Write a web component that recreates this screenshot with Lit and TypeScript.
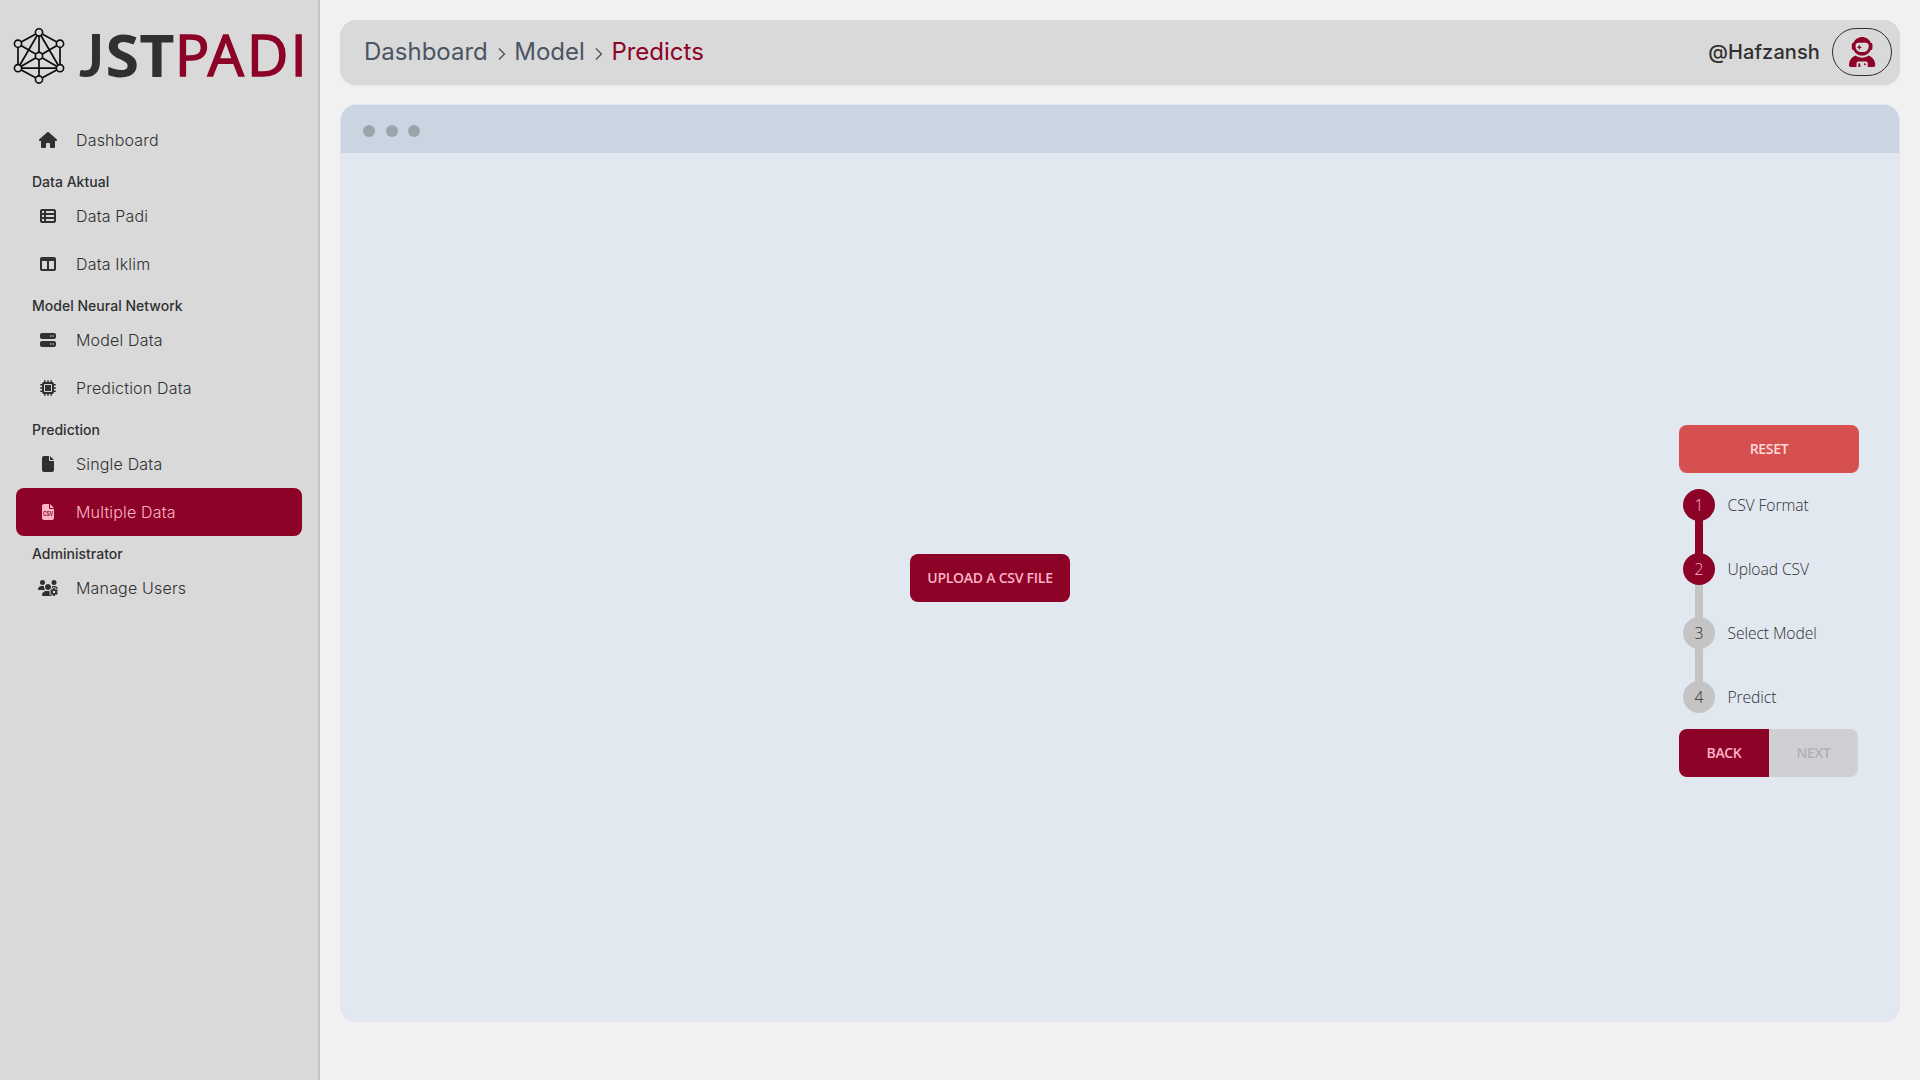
import { LitElement, html, svg, css } from "lit";
import { customElement, property } from "lit/decorators.js";
import { classMap } from "lit/directives/class-map.js";

interface Glyph {
  w: number;
  d: string;
}

const FILE =
  "M0 64C0 28.7 28.7 0 64 0H224V128c0 17.7 14.3 32 32 32H384V448c0 35.3-28.7 64-64 64H64c-35.3 0-64-28.7-64-64V64zm384 64H256V0L384 128z";

const GLYPHS: Record<string, Glyph> = {
  house: {
    w: 576,
    d: "M575.8 255.5c0 18-15 32.1-32 32.1h-32l.7 160.2c0 2.7-.2 5.4-.5 8.1V472c0 22.1-17.9 40-40 40H456c-1.1 0-2.2 0-3.3-.1c-1.4 .1-2.8 .1-4.2 .1H416 392c-22.1 0-40-17.9-40-40V448 384c0-17.7-14.3-32-32-32H256c-17.7 0-32 14.3-32 32v64 24c0 22.1-17.9 40-40 40H160 128.1c-1.5 0-3-.1-4.5-.2c-1.2 .1-2.4 .2-3.6 .2H104c-22.1 0-40-17.9-40-40V360c0-.9 0-1.9 .1-2.8V287.6H32c-18 0-32-14-32-32.1c0-9 3-17 10-24L266.4 8c7-7 15-8 22-8s15 2 21 7L564.8 231.5c8 7 12 15 11 24z",
  },
  list: {
    w: 512,
    d: "M0 96C0 60.7 28.7 32 64 32H448c35.3 0 64 28.7 64 64V416c0 35.3-28.7 64-64 64H64c-35.3 0-64-28.7-64-64V96zm64 0v64h64V96H64zm384 0H192v64H448V96zM64 224v64h64V224H64zm384 0H192v64H448V224zM64 352v64h64V352H64zm384 0H192v64H448V352z",
  },
  columns: {
    w: 512,
    d: "M0 96C0 60.7 28.7 32 64 32H448c35.3 0 64 28.7 64 64V416c0 35.3-28.7 64-64 64H64c-35.3 0-64-28.7-64-64V96zm64 64V416H224V160H64zm384 0H288V416H448V160z",
  },
  server: {
    w: 512,
    d: "M64 32C28.7 32 0 60.7 0 96v64c0 35.3 28.7 64 64 64H448c35.3 0 64-28.7 64-64V96c0-35.3-28.7-64-64-64H64zm280 72a24 24 0 1 1 0 48 24 24 0 1 1 0-48zm48 24a24 24 0 1 1 48 0 24 24 0 1 1 -48 0zM64 288c-35.3 0-64 28.7-64 64v64c0 35.3 28.7 64 64 64H448c35.3 0 64-28.7 64-64V352c0-35.3-28.7-64-64-64H64zm280 72a24 24 0 1 1 0 48 24 24 0 1 1 0-48zm56 24a24 24 0 1 1 48 0 24 24 0 1 1 -48 0z",
  },
  chip: {
    w: 512,
    d: "M176 24c0-13.3-10.7-24-24-24s-24 10.7-24 24V64c-35.3 0-64 28.7-64 64H24c-13.3 0-24 10.7-24 24s10.7 24 24 24H64v56H24c-13.3 0-24 10.7-24 24s10.7 24 24 24H64v56H24c-13.3 0-24 10.7-24 24s10.7 24 24 24H64c0 35.3 28.7 64 64 64v40c0 13.3 10.7 24 24 24s24-10.7 24-24V448h56v40c0 13.3 10.7 24 24 24s24-10.7 24-24V448h56v40c0 13.3 10.7 24 24 24s24-10.7 24-24V448c35.3 0 64-28.7 64-64h40c13.3 0 24-10.7 24-24s-10.7-24-24-24H448V280h40c13.3 0 24-10.7 24-24s-10.7-24-24-24H448V176h40c13.3 0 24-10.7 24-24s-10.7-24-24-24H448c0-35.3-28.7-64-64-64V24c0-13.3-10.7-24-24-24s-24 10.7-24 24V64H280V24c0-13.3-10.7-24-24-24s-24 10.7-24 24V64H176V24zM160 128H352c17.7 0 32 14.3 32 32V352c0 17.7-14.3 32-32 32H160c-17.7 0-32-14.3-32-32V160c0-17.7 14.3-32 32-32zm192 32H160V352H352V160z",
  },
  file: { w: 384, d: FILE },
  csv: { w: 384, d: FILE },
  users: {
    w: 640,
    d: "M144 160A80 80 0 1 0 144 0a80 80 0 1 0 0 160zm368 0A80 80 0 1 0 512 0a80 80 0 1 0 0 160zM0 298.7C0 310.4 9.6 320 21.3 320H234.7c.2 0 .4 0 .7 0c-26.6-23.5-43.3-57.8-43.3-96c0-7.6 .7-15 1.9-22.3c-13.6-6.3-28.7-9.7-44.6-9.7H106.7C47.8 192 0 239.8 0 298.7zM320 320c24 0 45.9-8.8 62.7-23.3c2.5-3.7 5.2-7.3 8-10.7c2.7-3.3 5.7-6.1 9-8.3C410 262.3 416 243.9 416 224c0-53-43-96-96-96s-96 43-96 96s43 96 96 96zm65.4 60.2c-10.3-5.9-18.1-16.2-20.8-28.2H261.3C187.7 352 128 411.7 128 485.3c0 14.7 11.9 26.7 26.7 26.7H455.2c-2.1-5.2-3.2-10.9-3.2-16.4v-3c-1.3-.7-2.7-1.5-4-2.3l-2.6 1.5c-16.8 9.7-40.5 8-54.7-9.7c-4.5-5.6-8.6-11.5-12.4-17.6l-.1-.2-.1-.2-2.4-4.1-.1-.2-.1-.2c-3.4-6.2-6.4-12.6-9-19.3c-8.2-21.2 2.2-42.6 19-52.3l2.7-1.5c0-.8 0-1.5 0-2.3s0-1.5 0-2.3l-2.7-1.5zM533.3 192H490.7c-15.9 0-31 3.5-44.6 9.7c1.3 7.2 1.9 14.7 1.9 22.3c0 17.4-3.5 33.9-9.7 49c2.5 .9 4.9 2 7.1 3.3l2.6 1.5c1.3-.8 2.6-1.6 4-2.3v-3c0-19.4 13.3-39.1 35.8-42.6c7.9-1.2 16-1.9 24.2-1.9s16.3 .6 24.2 1.9c22.5 3.5 35.8 23.2 35.8 42.6v3c1.3 .7 2.7 1.5 4 2.3l2.6-1.5c16.8-9.7 40.5-8 54.7 9.7c2.3 2.8 4.5 5.8 6.6 8.7c-2.1-57.1-49-102.7-106.6-102.7zm91.3 163.9c6.3-3.6 9.5-11.1 6.8-18c-2.1-5.5-4.6-10.8-7.4-15.9l-2.3-4c-3.1-5.1-6.5-9.9-10.2-14.5c-4.6-5.7-12.7-6.7-19-3l-2.9 1.7c-9.2 5.3-20.4 4-29.6-1.3s-16.1-14.5-16.1-25.1v-3.4c0-7.3-4.9-13.8-12.1-14.9c-6.5-1-13.1-1.5-19.9-1.5s-13.4 .5-19.9 1.5c-7.2 1.1-12.1 7.6-12.1 14.9v3.4c0 10.6-6.9 19.8-16.1 25.1s-20.4 6.6-29.6 1.3l-2.9-1.7c-6.3-3.6-14.4-2.6-19 3c-3.7 4.6-7.1 9.5-10.2 14.6l-2.3 3.9c-2.8 5.1-5.3 10.4-7.4 15.9c-2.6 6.8 .5 14.3 6.8 17.9l2.9 1.7c9.2 5.3 13.7 15.8 13.7 26.4s-4.5 21.1-13.7 26.4l-3 1.7c-6.3 3.6-9.5 11.1-6.8 17.9c2.1 5.5 4.6 10.7 7.4 15.8l2.4 4.1c3 5.1 6.4 9.9 10.1 14.5c4.6 5.7 12.7 6.7 19 3l2.9-1.7c9.2-5.3 20.4-4 29.6 1.3s16.1 14.5 16.1 25.1v3.4c0 7.3 4.9 13.8 12.1 14.9c6.5 1 13.1 1.5 19.9 1.5s13.4-.5 19.9-1.5c7.2-1.1 12.1-7.6 12.1-14.9v-3.4c0-10.6 6.9-19.8 16.1-25.1s20.4-6.6 29.6-1.3l2.9 1.7c6.3 3.6 14.4 2.6 19-3c3.7-4.6 7.1-9.4 10.1-14.5l2.4-4.2c2.8-5.1 5.3-10.3 7.4-15.8c2.6-6.8-.5-14.3-6.8-17.9l-3-1.7c-9.2-5.3-13.7-15.8-13.7-26.4s4.5-21.1 13.7-26.4l3-1.7zM472 384a40 40 0 1 1 80 0 40 40 0 1 1 -80 0z",
  },
  astronaut: {
    w: 448,
    d: "M370.7 96.1C346.1 39.5 289.7 0 224 0S101.9 39.5 77.3 96.1C60.9 97.5 48 111.2 48 128v64c0 16.8 12.9 30.5 29.3 31.9C101.9 280.5 158.3 320 224 320s122.1-39.5 146.7-96.1c16.4-1.4 29.3-15.1 29.3-31.9V128c0-16.8-12.9-30.5-29.3-31.9zM336 144v16c0 53-43 96-96 96H208c-53 0-96-43-96-96V144c0-26.5 21.5-48 48-48H288c26.5 0 48 21.5 48 48zM189.3 162.7l-6-21.2c-.9-3.3-3.9-5.5-7.3-5.5s-6.4 2.2-7.3 5.5l-6 21.2-21.2 6c-3.3 .9-5.5 3.9-5.5 7.3s2.2 6.4 5.5 7.3l21.2 6 6 21.2c.9 3.3 3.9 5.5 7.3 5.5s6.4-2.2 7.3-5.5l6-21.2 21.2-6c3.3-.9 5.5-3.9 5.5-7.3s-2.2-6.4-5.5-7.3l-21.2-6zM112.7 316.5C46.7 342.6 0 407 0 482.3C0 498.7 13.3 512 29.7 512H128V448c0-17.7 14.3-32 32-32H288c17.7 0 32 14.3 32 32v64l98.3 0c16.4 0 29.7-13.3 29.7-29.7c0-75.3-46.7-139.7-112.7-165.8C303.9 338.8 265.5 352 224 352s-79.9-13.2-111.3-35.5zM176 448c-8.8 0-16 7.2-16 16v48h32V464c0-8.8-7.2-16-16-16zm96 32a16 16 0 1 0 0-32 16 16 0 1 0 0 32z",
  },
};

@customElement("ui-icon")
class UiIcon extends LitElement {
  @property() name = "file";
  @property({ type: Number }) size = 16;

  static styles = css`
    :host {
      display: inline-flex;
    }
    .glyph {
      display: block;
      overflow: visible;
      fill: currentColor;
    }
    .badge {
      fill: #8c0327;
      font: 700 205px "Liberation Sans", Arial, sans-serif;
    }
  `;

  render() {
    const g = GLYPHS[this.name];
    return html`<svg class="glyph" width=${(g.w / 512) * this.size} height=${this.size} viewBox="0 0 ${g.w} 512">
      <path d=${g.d}></path>
      ${this.name === "csv"
        ? svg`<text class="badge" x="32" y="376" textLength="320" lengthAdjust="spacingAndGlyphs">CSV</text>`
        : null}
    </svg>`;
  }
}

@customElement("brand-logo")
class BrandLogo extends LitElement {
  static styles = css`
    :host {
      display: block;
    }
    .logo {
      display: block;
    }
    .edge {
      stroke: #0c0c0c;
      stroke-width: 1.7;
      fill: none;
    }
    .node {
      stroke: #0c0c0c;
      stroke-width: 1.6;
      fill: #d9d9d9;
    }
    .word {
      font-family: "Open Sans", "Noto Sans", sans-serif;
      font-size: 58.8px;
    }
    .bold {
      font-weight: 700;
      fill: #303030;
    }
    .lato {
      font-family: Lato, sans-serif;
    }
    .thin {
      font-size: 57px;
      font-weight: 400;
      fill: #8c0327;
      stroke: #8c0327;
      stroke-width: 1.6;
    }
  `;

  render() {
    const nodes = [
      [39, 32.3], [18, 43.7], [60, 43.7], [39, 56], [18, 68.2], [60, 68.2], [39, 79.5],
    ];
    return html`<svg class="logo" width="318" height="116" viewBox="0 0 318 116">
      <path class="edge" d="M39 32.3 60 43.7V68.2L39 79.5 18 68.2V43.7ZV79.5M18 43.7 60 68.2M60 43.7 18 68.2H60L39 32.3 18 68.2"></path>
      ${nodes.map(([x, y]) => svg`<circle class="node" cx=${x} cy=${y} r="3.6"></circle>`)}
      <text class="word bold lato" x="79" y="77">J</text>
      <text class="word bold" x="105.500" y="77" textLength="69" lengthAdjust="spacingAndGlyphs">ST</text>
      <text class="word thin" x="175 207.700 247.100 290.700" y="76.300">PADI</text>
    </svg>`;
  }
}

type Entry = { title: string } | { icon: string; label: string; active?: boolean };

const MENU: Entry[] = [
  { icon: "house", label: "Dashboard" },
  { title: "Data Aktual" },
  { icon: "list", label: "Data Padi" },
  { icon: "columns", label: "Data Iklim" },
  { title: "Model Neural Network" },
  { icon: "server", label: "Model Data" },
  { icon: "chip", label: "Prediction Data" },
  { title: "Prediction" },
  { icon: "file", label: "Single Data" },
  { icon: "csv", label: "Multiple Data", active: true },
  { title: "Administrator" },
  { icon: "users", label: "Manage Users" },
];

const STEPS = ["CSV Format", "Upload CSV", "Select Model", "Predict"];
const CURRENT_STEP = 2;

@customElement("app-root")
class AppRoot extends LitElement {
  static styles = css`
    :host {
      display: flex;
      height: 1080px;
      overflow: hidden;
      background: #f1f1f1;
      color: #303030;
      font-family: Inter, sans-serif;
      font-size: 16px;
      line-height: 24px;
    }
    * {
      box-sizing: border-box;
    }
    .side {
      width: 320px;
      flex: none;
      background: #d9d9d9;
      border-right: 2px solid #c4c4c4;
    }
    .menu {
      padding: 0 16px;
    }
    .title {
      height: 28px;
      padding: 8px 16px 0;
      font-size: 14px;
      line-height: 20px;
      font-weight: 550;
      letter-spacing: 0.02px;
    }
    .item {
      display: flex;
      align-items: center;
      gap: 12px;
      height: 48px;
      padding: 0 16px;
      border-radius: 8px;
      font-weight: 300;
      letter-spacing: 0.18px;
    }
    .item.active {
      background: #8c0327;
      color: #ffb3c7;
    }
    .slot {
      display: flex;
      justify-content: center;
      width: 32px;
    }
    .main {
      flex: 1;
      display: flex;
      flex-direction: column;
      gap: 19px;
      padding: 20px 20px 58px;
    }
    .bar {
      display: flex;
      align-items: center;
      justify-content: space-between;
      height: 65px;
      padding: 0 8px 1px 24px;
      border-radius: 16px;
      background: #d9d9d9;
      box-shadow: 0 1px 2px rgba(0, 0, 0, 0.05);
    }
    .crumbs {
      display: flex;
      align-items: center;
      font-size: 24px;
      line-height: 32px;
      color: #4b5563;
    }
    .chev {
      width: 8px;
      height: 12px;
      margin: 3px 8.5px 0 10px;
      fill: none;
      stroke: currentColor;
      stroke-width: 1.4;
    }
    .here {
      color: #8c0327;
    }
    .user {
      display: flex;
      align-items: center;
      gap: 12px;
      font-size: 20px;
      font-weight: 500;
      letter-spacing: 0.1px;
    }
    .avatar {
      display: flex;
      align-items: center;
      justify-content: center;
      width: 60px;
      height: 48px;
      border: 1px solid #303030;
      border-radius: 24px;
      color: #8c0327;
    }
    .window {
      flex: 1;
      display: flex;
      flex-direction: column;
      overflow: hidden;
      border: 1px solid #e0e6ee;
      border-radius: 16px;
      background: #e1e8f0;
    }
    .chrome {
      display: flex;
      align-items: center;
      gap: 10.4px;
      height: 48px;
      padding: 4px 0 0 22.4px;
      background: #cbd5e1;
    }
    .dot {
      width: 12px;
      height: 12px;
      border-radius: 50%;
      background: #9ca5ab;
    }
    .body {
      flex: 1;
      display: flex;
      gap: 40px;
      padding-right: 40px;
      font-family: "Open Sans", "Noto Sans", sans-serif;
    }
    .stage {
      flex: 1;
      display: flex;
      justify-content: center;
      padding-top: 401px;
    }
    .panel {
      width: 180px;
      padding-top: 272px;
    }
    .btn {
      display: flex;
      align-items: center;
      justify-content: center;
      height: 48px;
      border-radius: 8px;
      background: #8c0327;
      color: #ffb3c7;
      font-size: 14px;
      font-weight: 600;
      line-height: 14px;
      letter-spacing: -0.35px;
    }
    .upload {
      width: 160px;
      letter-spacing: -0.25px;
    }
    .reset {
      background: #d75050;
      color: #fcdada;
    }
    .steps {
      padding: 16px 0 16px 4px;
    }
    .step {
      display: flex;
      align-items: center;
      gap: 12.5px;
      font-size: 15.7px;
      font-weight: 350;
      letter-spacing: -0.1px;
    }
    .num {
      display: flex;
      align-items: center;
      justify-content: center;
      width: 32px;
      height: 32px;
      border-radius: 50%;
      background: #c4c4c4;
    }
    .link {
      width: 8px;
      height: 34px;
      margin: -1px 0 -1px 12px;
      background: #c4c4c4;
    }
    .num.done,
    .link.done {
      background: #8c0327;
      color: #ffb3c7;
    }
    .pair {
      display: flex;
      width: 179px;
    }
    .back {
      width: 90px;
      border-radius: 8px 0 0 8px;
    }
    .next {
      flex: 1;
      border-radius: 0 8px 8px 0;
      background: #cfcfd4;
      color: #b0b1b6;
    }
  `;

  private entry(e: Entry) {
    if ("title" in e) return html`<div class="title">${e.title}</div>`;
    return html`<div class=${classMap({ item: true, active: !!e.active })}>
      <span class="slot"><ui-icon name=${e.icon}></ui-icon></span>
      <span>${e.label}</span>
    </div>`;
  }

  private step(label: string, i: number) {
    const done = i < CURRENT_STEP;
    return html`${i > 0 ? html`<div class=${classMap({ link: true, done })}></div>` : null}
      <div class="step">
        <span class=${classMap({ num: true, done })}>${i + 1}</span>
        <span>${label}</span>
      </div>`;
  }

  private chevron() {
    return html`<svg class="chev" viewBox="0 0 8 12"><path d="M1 .6 6.400 6 1 11.400"></path></svg>`;
  }

  render() {
    return html`
      <aside class="side">
        <brand-logo></brand-logo>
        <nav class="menu">${MENU.map((e) => this.entry(e))}</nav>
      </aside>
      <main class="main">
        <header class="bar">
          <div class="crumbs">
            <span>Dashboard</span>${this.chevron()}<span>Model</span>${this.chevron()}<span class="here"
              >Predicts</span
            >
          </div>
          <div class="user">
            <span>@Hafzansh</span>
            <span class="avatar"><ui-icon name="astronaut" size="30"></ui-icon></span>
          </div>
        </header>
        <section class="window">
          <div class="chrome">
            <span class="dot"></span><span class="dot"></span><span class="dot"></span>
          </div>
          <div class="body">
            <div class="stage"><div class="btn upload">UPLOAD A CSV FILE</div></div>
            <div class="panel">
              <div class="btn reset">RESET</div>
              <div class="steps">${STEPS.map((s, i) => this.step(s, i))}</div>
              <div class="pair">
                <div class="btn back">BACK</div>
                <div class="btn next">NEXT</div>
              </div>
            </div>
          </div>
        </section>
      </main>
    `;
  }
}
